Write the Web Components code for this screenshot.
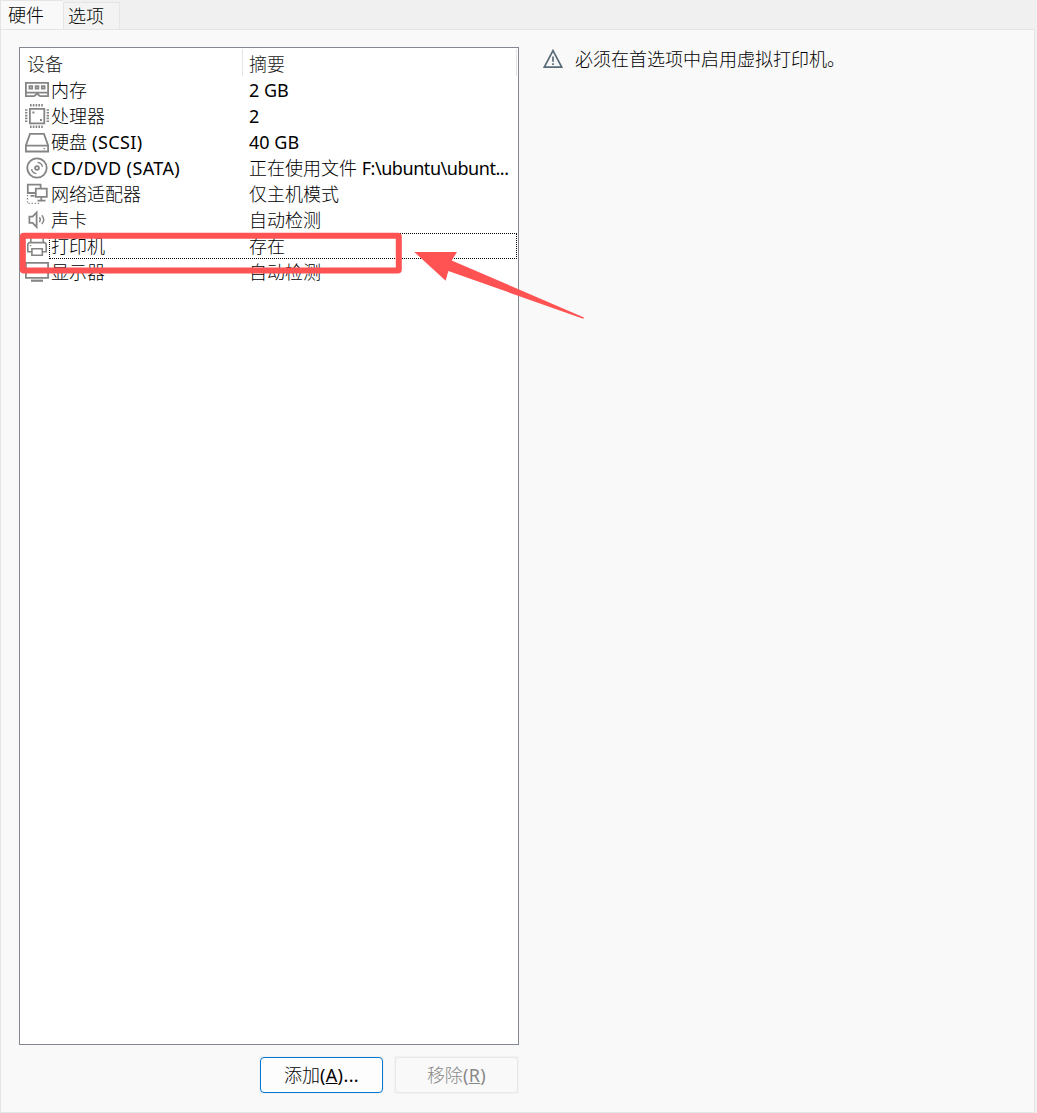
<!DOCTYPE html>
<html lang="zh-CN">
<head>
<meta charset="utf-8">
<title>硬件</title>
<style>
  body {
    margin: 0;
    font-family: "Noto Sans", "Noto Sans CJK SC", sans-serif;
    font-size: 18px;
    line-height: 26px;
    color: #000;
    background: #f0f0f0;
    white-space: nowrap;
  }
  /* latin text is heavier than the thin Chinese glyphs */
  .en {
    font-weight: 400;
  }
  .wide {
    letter-spacing: .4px;
  }
  .tight {
    letter-spacing: -.45px;
  }
</style>
</head>
<body>
<settings-dialog>
  <dialog-tab slot="tabs" selected>硬件</dialog-tab>
  <dialog-tab slot="tabs">选项</dialog-tab>

  <device-list slot="list">
    <device-row icon="memory"><span slot="name">内存</span><span class="en">2 GB</span></device-row>
    <device-row icon="cpu"><span slot="name">处理器</span><span class="en">2</span></device-row>
    <device-row icon="disk"><span slot="name">硬盘<span class="en wide"> (SCSI)</span></span><span class="en">40 GB</span></device-row>
    <device-row icon="cd"><span slot="name" class="en wide">CD/DVD (SATA)</span>正在使用文件 <span class="en tight">F:\ubuntu\ubunt...</span></device-row>
    <device-row icon="network"><span slot="name">网络适配器</span>仅主机模式</device-row>
    <device-row icon="sound"><span slot="name">声卡</span>自动检测</device-row>
    <device-row icon="printer" focused><span slot="name">打印机</span>存在</device-row>
    <device-row icon="display"><span slot="name">显示器</span>自动检测</device-row>
  </device-list>

  <push-button slot="buttons" default>添加<span class="en wide">(<u>A</u>)...</span></push-button>
  <push-button slot="buttons" disabled>移除<span class="en wide">(<u>R</u>)</span></push-button>

  <warning-note slot="detail">必须在首选项中启用虚拟打印机。</warning-note>
</settings-dialog>
<red-marker></red-marker>

<script>
const icons = {
  memory: `
    <path d="M.9 5.9h22.2v13.2h-8l-3-2.4-3 2.4H.9zM.9 15.6h22.2"/>
    <path fill="#b5b5b5" stroke-width="1.5" d="M4.3 9h3v2.8h-3zM10.5 9h3v2.8h-3zM16.7 9h3v2.8h-3z"/>`,
  cpu: `
    <path d="M4.9 5.9h14.4v14.4H4.9z"/>
    <path stroke-dasharray="1.6 1.2" stroke-width="2.4" d="M5 2.2h12.8M5 23.8h12.8M1.2 6.2v12.8M22.8 6.2v12.8"/>
    <path fill="#858585" stroke="none" d="M7.4 8.4h2v2h-2zM15 16h2v2h-2z"/>`,
  disk: `
    <path d="M5 4.9h14l4.1 11.6v6H.9v-6zM1 16.7h22"/>
    <path stroke-width="1.3" d="M18.5 19.6h1.6"/>`,
  cd: `
    <circle cx="12" cy="13" r="9.7"/>
    <circle cx="12" cy="13" r="1.9"/>
    <path stroke-width="1.4" d="M12.6 7.4a5.6 5.6 0 0 1 4.9 4.4M11.4 18.6a5.6 5.6 0 0 1-4.9-4.4"/>`,
  network: `
    <path d="M10.5 12H2.8V3.6h12.8v3.2M10.8 7.7h11v8.2h-11zM16.3 16v3.2M12.5 19.6h8M5.5 14.8h4"/>
    <path stroke-width="1.3" stroke-dasharray="1.3 1.8" d="M2.5 14v8.3h12.5"/>`,
  sound: `
    <path d="M4.4 9.6h3.2l4-4.2v14.6l-4-4.2H4.4z"/>
    <path stroke-width="1.4" d="M14.4 10.3q1.8 2.3 0 4.8M16.8 8.2q3.8 4.4 0 8.8"/>`,
  printer: `
    <path stroke-width="1.6" d="M5.8 9.6V3h12.4v6.6M6.3 18.8H2.8V11l1.4-1.4h15.6l1.4 1.4v7.8h-3.5M6.9 15.7h10.4v6.5H6.9z"/>
    <path stroke-width="1.2" d="M4.8 12.6h1.5"/>`,
  display: `
    <path d="M.9 3.8h22.2v15H.9z"/>
    <path stroke-width="2.2" d="M6 21.7h12"/>`
};

class SettingsDialog extends HTMLElement {
  constructor() {
    super();
    this.attachShadow({ mode: "open" }).innerHTML = `
      <style>
        :host {
          display: flex;
          flex-direction: column;
          height: 1113px;
          box-sizing: border-box;
          padding-right: 2px;
        }
        .tabs {
          display: flex;
          align-items: flex-end;
          height: 29px;
        }
        .panel {
          flex: 1;
          box-sizing: border-box;
          display: grid;
          grid-template-columns: 500px 1fr;
          grid-template-rows: 998px 38px;
          column-gap: 24px;
          row-gap: 11px;
          padding: 17px 18px 0;
          background: #f9f9f9;
          border: 1px solid #e5e5e5;
        }
        .buttons {
          grid-row: 2;
          display: flex;
          justify-content: flex-end;
          gap: 10px;
        }
      </style>
      <div class="tabs"><slot name="tabs"></slot></div>
      <div class="panel">
        <slot name="list"></slot>
        <slot name="detail"></slot>
        <div class="buttons"><slot name="buttons"></slot></div>
      </div>`;
  }
}

class DialogTab extends HTMLElement {
  constructor() {
    super();
    this.attachShadow({ mode: "open" }).innerHTML = `
      <style>
        :host {
          display: block;
          box-sizing: border-box;
          width: 57px;
          height: 27px;
          padding-left: 4px;
          line-height: 27px;
          font-weight: 300;
          background: #f3f3f3;
          border: 1px solid #e5e5e5;
          border-bottom: none;
        }
        /* the selected tab hides the top border of the panel */
        :host([selected]) {
          width: 63px;
          height: 30px;
          padding-left: 7px;
          margin-bottom: -1px;
          line-height: 28px;
          background: #f9f9f9;
          border-right: none;
        }
      </style>
      <slot></slot>`;
  }
}

class DeviceList extends HTMLElement {
  constructor() {
    super();
    this.attachShadow({ mode: "open" }).innerHTML = `
      <style>
        :host {
          display: block;
          box-sizing: border-box;
          background: #fff;
          border: 1px solid #828790;
        }
        .head {
          display: grid;
          grid-template-columns: 223px 1fr;
          height: 28px;
          margin: 1px 1px 0 0;
          line-height: 30px;
          font-weight: 300;
          color: #222;
        }
        .head span {
          height: 27px;
          border-right: 1px solid #e5e5e5;
          padding-left: 7px;
        }
        .head span + span {
          padding-left: 6px;
        }
      </style>
      <div class="head"><span>设备</span><span>摘要</span></div>
      <slot></slot>`;
  }
}

class DeviceRow extends HTMLElement {
  connectedCallback() {
    this.attachShadow({ mode: "open" }).innerHTML = `
      <style>
        :host {
          display: flex;
          height: 26px;
          padding: 0 1px 0 5px;
          font-weight: 300;
        }
        svg {
          flex: none;
          width: 24px;
          height: 26px;
          fill: none;
          stroke: #858585;
          stroke-width: 1.8;
        }
        .cells {
          flex: 1;
          box-sizing: border-box;
          display: grid;
          grid-template-columns: 198px 1fr;
          border: 1px solid transparent;
          padding-left: 1px;
          line-height: 24px;
        }
        :host([focused]) .cells {
          border: 1px dotted #000;
        }
      </style>
      <svg viewBox="0 0 24 26">${icons[this.getAttribute("icon")]}</svg>
      <div class="cells"><slot name="name"></slot><span><slot></slot></span></div>`;
  }
}

class PushButton extends HTMLElement {
  constructor() {
    super();
    this.attachShadow({ mode: "open" }).innerHTML = `
      <style>
        :host {
          display: block;
          box-sizing: border-box;
          width: 125px;
          height: 38px;
          padding: 1px;
          background: #f2f2f2;
        }
        button {
          display: block;
          box-sizing: border-box;
          width: 100%;
          height: 100%;
          padding: 0;
          font: inherit;
          font-weight: 300;
          color: #000;
          background: #fdfdfd;
          border: 1px solid #e8e8e8;
          border-radius: 4px;
        }
        :host([default]) button {
          border-color: #0078d4;
        }
        :host([disabled]) button {
          color: #888;
          background: #f9f9f9;
        }
      </style>
      <button><slot></slot></button>`;
  }
}

class WarningNote extends HTMLElement {
  constructor() {
    super();
    this.attachShadow({ mode: "open" }).innerHTML = `
      <style>
        :host {
          display: flex;
          gap: 12px;
          font-weight: 300;
          line-height: 24px;
        }
        svg {
          flex: none;
          width: 20px;
          height: 24px;
          fill: none;
          stroke: #5a6b78;
          stroke-width: 1.7;
        }
      </style>
      <svg viewBox="0 0 20 24"><path d="M10 3.6 18.7 20.1H1.3zM10 9.5v5.2M10 16.3v1.7"/></svg>
      <span><slot></slot></span>`;
  }
}

// hand-drawn highlight lying over the list
class RedMarker extends HTMLElement {
  constructor() {
    super();
    this.attachShadow({ mode: "open" }).innerHTML = `
      <style>
        :host {
          position: absolute;
          left: 0;
          top: 220px;
          pointer-events: none;
        }
        svg {
          display: block;
        }
      </style>
      <svg width="600" height="110" viewBox="0 220 600 110">
        <rect x="22.8" y="235.7" width="376" height="34.7" rx="1" fill="none" stroke="#ff5353" stroke-width="6" stroke-linejoin="round"/>
        <path fill="#ff5353" d="M414.3 252H457l-5.3 8.5L584 317.4l-.8 1.4L448.3 271l-2.6 9.7z"/>
      </svg>`;
  }
}

customElements.define("settings-dialog", SettingsDialog);
customElements.define("dialog-tab", DialogTab);
customElements.define("device-list", DeviceList);
customElements.define("device-row", DeviceRow);
customElements.define("push-button", PushButton);
customElements.define("warning-note", WarningNote);
customElements.define("red-marker", RedMarker);
</script>
</body>
</html>
